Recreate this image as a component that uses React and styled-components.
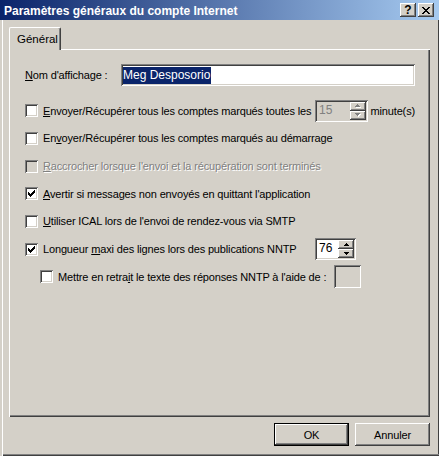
import React from 'react'
import styled, { createGlobalStyle } from 'styled-components'

const Global = createGlobalStyle`
  html, body { margin: 0; padding: 0; background: #d4d0c8; }
  body {
    font-family: "Liberation Sans", Arial, sans-serif;
    font-size: 11px;
    color: #000;
  }
`

const Window = styled.div`
  width: 439px;
  height: 456px;
  box-sizing: border-box;
  padding: 0 1px 2px 3px;
  background: #d4d0c8;
  display: flex;
  flex-direction: column;
  box-shadow:
    inset 2px 0 #d4d0c8,
    inset 3px 0 #fff,
    inset 0 -1px #404040,
    inset 0 -2px #808080,
    inset -1px 0 #404040;
`

const TitleBar = styled.div`
  height: 20px;
  margin: 0 -1px 0 -3px;
  padding: 0 5px 0 4px;
  display: flex;
  align-items: center;
  background: linear-gradient(to right, #0a246a, #a6caf0);
  color: #fff;
  font-weight: bold;
  font-size: 12px;
`

const TitleText = styled.div`
  flex: 1;
  white-space: nowrap;
  padding-top: 1px;
`

const TitleButtons = styled.div`
  display: flex;
  gap: 2px;
`

const Raised = `
  background: #d4d0c8;
  box-shadow:
    inset -1px -1px #404040,
    inset 1px 1px #fff,
    inset -2px -2px #808080,
    inset 2px 2px #d4d0c8;
`

const Sunken = `
  box-shadow:
    inset 1px 1px #808080,
    inset -1px -1px #fff,
    inset 2px 2px #404040,
    inset -2px -2px #d4d0c8;
`

const CaptionButton = styled.div`
  ${Raised}
  width: 16px;
  height: 14px;
  box-sizing: border-box;
  display: flex;
  align-items: center;
  justify-content: center;
  color: #000;
  font-weight: bold;
  font-size: 12px;
  line-height: 14px;
`

const Content = styled.div`
  flex: 1;
  display: flex;
  flex-direction: column;
  padding: 7px 8px 0 6px;
  letter-spacing: -0.15px;
`

const TabStrip = styled.div`
  display: flex;
  height: 22px;
`

const Tab = styled.div`
  position: relative;
  z-index: 1;
  width: 52px;
  height: 23px;
  box-sizing: border-box;
  padding: 5px 0 0 7px;
  background: #d4d0c8;
  border-top: 1px solid #fff;
  border-left: 1px solid #fff;
  border-right: 1px solid #404040;
  border-radius: 2px 2px 0 0;
  box-shadow: inset -1px 0 #808080;
  font-size: 11.5px;
  letter-spacing: 0;
`

const Panel = styled.div`
  height: 368px;
  box-sizing: border-box;
  padding: 15px 15px 0 16px;
  box-shadow:
    inset 1px 1px #fff,
    inset -1px -1px #404040,
    inset -2px -2px #808080;
  display: flex;
  flex-direction: column;
`

const FieldRow = styled.div`
  display: flex;
  align-items: center;
  height: 22px;
  margin-bottom: 11px;
`

const FieldLabel = styled.span`
  width: 96px;
`

const TextInput = styled.div`
  ${Sunken}
  flex: 1;
  height: 22px;
  box-sizing: border-box;
  background: #fff;
  display: flex;
  align-items: center;
  padding: 0 2px;
`

const Selected = styled.span`
  background: #0a246a;
  color: #fff;
  padding: 1px 1px 2px 0;
  font-size: 12px;
  letter-spacing: 0;
`

const Row = styled.div`
  display: flex;
  align-items: center;
  height: 27.67px;
  padding-left: ${p => p.$indent || 0}px;
`

const Box = styled.span`
  ${Sunken}
  width: 13px;
  height: 13px;
  flex: none;
  background: ${p => (p.$disabled ? '#d4d0c8' : '#fff')};
  display: flex;
  align-items: center;
  justify-content: center;
  margin-right: 5px;
`

const Label = styled.span`
  white-space: nowrap;
  min-width: ${p => p.$col || 0}px;
  color: ${p => (p.$disabled ? '#808080' : '#000')};
  text-shadow: ${p => (p.$disabled ? '1px 1px #fff' : 'none')};
`

const Spin = styled.div`
  ${Sunken}
  width: ${p => p.$w}px;
  height: 22px;
  box-sizing: border-box;
  padding: 2px;
  display: flex;
  background: ${p => (p.$disabled ? '#d4d0c8' : '#fff')};
  color: ${p => (p.$disabled ? '#808080' : '#000')};
`

const SpinValue = styled.span`
  flex: 1;
  padding: 1px 0 0 2px;
  font-size: 12px;
  letter-spacing: 0;
`

const SpinButtons = styled.div`
  width: 16px;
  display: flex;
  flex-direction: column;
`

const SpinButton = styled.div`
  ${Raised}
  flex: 1;
  display: flex;
  align-items: center;
  justify-content: center;
`

const EmptyBox = styled.div`
  ${Sunken}
  width: 27px;
  height: 23px;
  background: #d4d0c8;
`

const After = styled.span`
  margin-left: 3px;
`

const Footer = styled.div`
  display: flex;
  justify-content: flex-end;
  gap: 6px;
  margin-top: 6px;
`

const Button = styled.div`
  ${Raised}
  width: 75px;
  height: 23px;
  box-sizing: border-box;
  display: flex;
  align-items: center;
  justify-content: center;
  ${p =>
    p.$default &&
    `
    box-shadow:
      inset 0 0 0 1px #000,
      inset -2px -2px #404040,
      inset 2px 2px #fff,
      inset -3px -3px #808080;
  `}
`

const Pixels = ({ rows, color = '#000', shadow }) => {
  const w = rows[0].length
  const h = rows.length
  const rects = []
  rows.forEach((r, y) =>
    [...r].forEach((c, x) => {
      if (c === 'X') rects.push([x, y])
    })
  )
  return (
    <svg width={w + (shadow ? 1 : 0)} height={h + (shadow ? 1 : 0)} shapeRendering="crispEdges">
      {shadow && rects.map(([x, y]) => <rect key={'s' + x + '-' + y} x={x + 1} y={y + 1} width="1" height="1" fill={shadow} />)}
      {rects.map(([x, y]) => <rect key={x + '-' + y} x={x} y={y} width="1" height="1" fill={color} />)}
    </svg>
  )
}

const CHECK = ['......X', '.....XX', 'X...XXX', 'XX.XXX.', 'XXXXX..', '.XXX...', '..X....']
const CLOSE = ['XX....XX', '.XX..XX.', '..XXXX..', '...XX...', '..XXXX..', '.XX..XX.', 'XX....XX']
const UP = ['..X..', '.XXX.', 'XXXXX']
const DOWN = ['XXXXX', '.XXX.', '..X..']

const Check = ({ checked, disabled }) => (
  <Box $disabled={disabled}>{checked && <Pixels rows={CHECK} />}</Box>
)

const Arrows = ({ disabled }) => (
  <SpinButtons>
    <SpinButton>
      <Pixels rows={UP} color={disabled ? '#808080' : '#000'} shadow={disabled ? '#fff' : null} />
    </SpinButton>
    <SpinButton>
      <Pixels rows={DOWN} color={disabled ? '#808080' : '#000'} shadow={disabled ? '#fff' : null} />
    </SpinButton>
  </SpinButtons>
)

export default function App() {
  return (
    <>
      <Global />
      <Window>
        <TitleBar>
          <TitleText>Paramètres généraux du compte Internet</TitleText>
          <TitleButtons>
            <CaptionButton>?</CaptionButton>
            <CaptionButton>
              <Pixels rows={CLOSE} />
            </CaptionButton>
          </TitleButtons>
        </TitleBar>
        <Content>
          <TabStrip>
            <Tab>Général</Tab>
          </TabStrip>
          <Panel>
            <FieldRow>
              <FieldLabel>
                <u>N</u>om d'affichage :
              </FieldLabel>
              <TextInput>
                <Selected>Meg Desposorio</Selected>
              </TextInput>
            </FieldRow>
            <Row>
              <Check />
              <Label $col={272}>
                <u>E</u>nvoyer/Récupérer tous les comptes marqués toutes les
              </Label>
              <Spin $w={53} $disabled>
                <SpinValue>15</SpinValue>
                <Arrows disabled />
              </Spin>
              <After>minute(s)</After>
            </Row>
            <Row>
              <Check />
              <Label>
                En<u>v</u>oyer/Récupérer tous les comptes marqués au démarrage
              </Label>
            </Row>
            <Row>
              <Check disabled />
              <Label $disabled>
                <u>R</u>accrocher lorsque l'envoi et la récupération sont terminés
              </Label>
            </Row>
            <Row>
              <Check checked />
              <Label>
                <u>A</u>vertir si messages non envoyés en quittant l'application
              </Label>
            </Row>
            <Row>
              <Check />
              <Label>
                <u>U</u>tiliser ICAL lors de l'envoi de rendez-vous via SMTP
              </Label>
            </Row>
            <Row>
              <Check checked />
              <Label $col={272}>
                Longueur <u>m</u>axi des lignes lors des publications NNTP
              </Label>
              <Spin $w={41}>
                <SpinValue>76</SpinValue>
                <Arrows />
              </Spin>
            </Row>
            <Row $indent={15}>
              <Check />
              <Label $col={276}>
                Mettre en retra<u>i</u>t le texte des réponses NNTP à l'aide de :
              </Label>
              <EmptyBox />
            </Row>
          </Panel>
          <Footer>
            <Button $default>OK</Button>
            <Button>Annuler</Button>
          </Footer>
        </Content>
      </Window>
    </>
  )
}
